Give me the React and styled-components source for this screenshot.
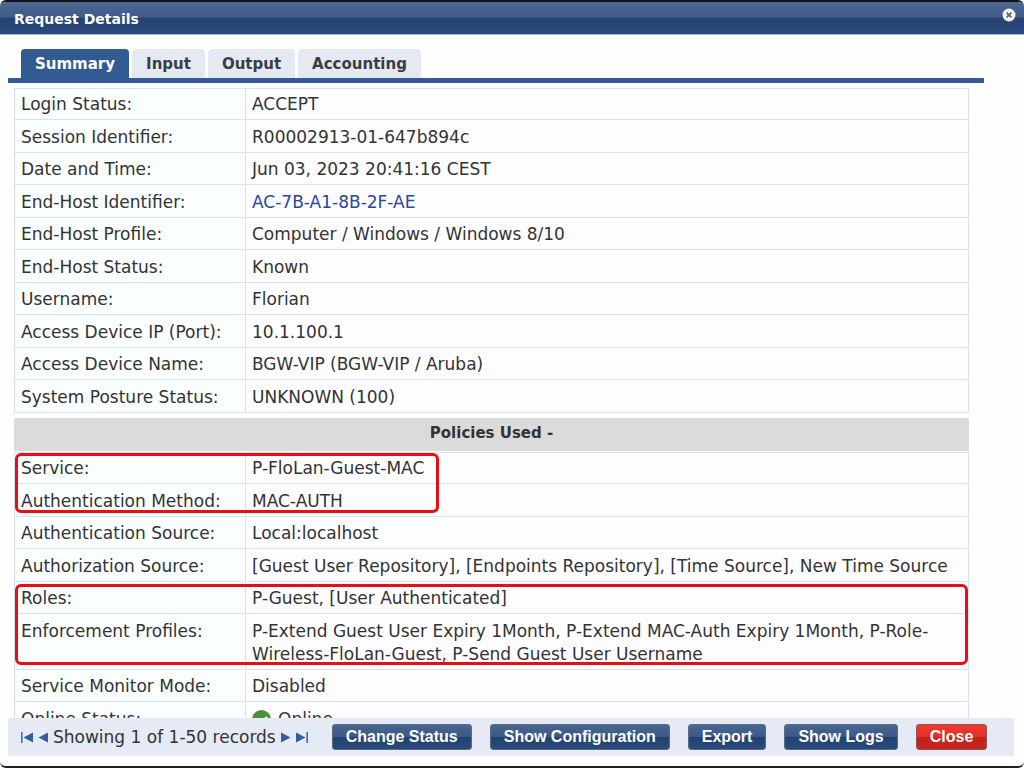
import React from "react";
import styled, { createGlobalStyle, css } from "styled-components";

const GlobalStyle = createGlobalStyle`
  * { box-sizing: border-box; }
  body {
    margin: 0;
    background: #fff;
    color: #333;
    font-family: Verdana, "DejaVu Sans", sans-serif;
    font-size: 17px;
  }
`;

const Page = styled.div`
  height: 100vh;
  padding-bottom: 2px;
`;

const Dialog = styled.section`
  display: flex;
  flex-direction: column;
  height: 100%;
  background: #fefefe;
  border-top: 2px solid #111418;
  border-bottom: 2px solid #1c231f;
  border-radius: 6px;
  overflow: hidden;
`;

const TitleBar = styled.header`
  display: flex;
  justify-content: space-between;
  align-items: center;
  flex: none;
  height: 33px;
  padding: 0 8px 0 14px;
  background: linear-gradient(#4b6792 0, #3e5a86 48%, #25426f 50%, #2a4b7d 100%);
  border-bottom: 1px solid #a9b3d8;
`;

const Title = styled.h1`
  margin: 0;
  padding-top: 2px;
  font-size: 14px;
  line-height: 20px;
  color: #fff;
`;

const IconButton = styled.button`
  display: flex;
  padding: 0;
  border: 0;
  background: none;
  cursor: pointer;
`;

const DismissButton = styled(IconButton)`
  align-self: flex-start;
  margin-top: 6px;
`;

const Tabs = styled.nav`
  display: flex;
  flex: none;
  gap: 3px;
  margin: 14px 40px 0 8px;
  padding-left: 13px;
  border-bottom: 5px solid #335b93;
`;

const Tab = styled.button`
  height: 29px;
  padding: 1px 14px 0;
  border: 0;
  border-radius: 4px 4px 0 0;
  font-family: inherit;
  font-size: 15px;
  font-weight: bold;
  line-height: 20px;
  cursor: pointer;
  color: ${(p) => (p.$active ? "#fff" : "#3a3d42")};
  background: ${(p) => (p.$active ? "#335b93" : "#e5e9f2")};
`;

const Content = styled.main`
  flex: 1;
  min-height: 0;
  margin-top: 4px;
  padding: 0 54px 0 13px;
  overflow-y: auto;
  scrollbar-width: none;
`;

const DetailTable = styled.table`
  width: 100%;
  table-layout: fixed;
  border-collapse: separate;
  border-spacing: 1px;
`;

const cell = css`
  padding: 4px 6px 3px;
  border: 0 solid #d3e0f5;
  border-bottom-width: 1px;
  border-left-width: 1px;
  font-weight: normal;
  line-height: 23px;
  text-align: left;
  vertical-align: top;
  tr:first-child > & {
    border-top-width: 1px;
  }
  tr:nth-child(even) > & {
    padding-top: 5px;
  }
`;

const Label = styled.th`
  ${cell}
  width: 230px;
  background: #fafeff;
`;

const Value = styled.td`
  ${cell}
  border-right-width: 1px;
  background: #fdfdff;
`;

const Row = styled.tr`
  position: relative;
`;

const Highlight = styled.span`
  position: absolute;
  z-index: 1;
  top: 1px;
  left: 1px;
  width: ${(p) => p.$width};
  height: ${(p) => p.$height};
  border: 3px solid #e60f14;
  border-radius: 6px;
  pointer-events: none;
`;

const SectionTitle = styled.h2`
  margin: 4px 1px 0;
  padding: 4px 0 6px;
  background: #dbdbdb;
  border-radius: 2px;
  font-size: 15px;
  line-height: 23px;
  text-align: center;
`;

const Link = styled.a`
  color: #2a479b;
  text-decoration: none;
`;

const Status = styled.span`
  display: flex;
  align-items: center;
  gap: 7px;
`;

const Footer = styled.footer`
  display: flex;
  align-items: center;
  flex: none;
  gap: 23px;
  height: 38px;
  margin: 0 10px 10px 8px;
  padding-left: 12px;
  background: #e5eaf4;
`;

const Pager = styled.div`
  display: flex;
  align-items: center;
  gap: 5px;
  white-space: nowrap;
`;

const Actions = styled.div`
  display: flex;
  gap: 18px;
`;

const ActionButton = styled.button`
  height: 26px;
  padding: 0 13px;
  border: 1px solid ${(p) => (p.$danger ? "#8c5650" : "#5c6b85")};
  border-radius: 3px;
  font: bold 16px/22px Arial, "Liberation Sans", sans-serif;
  white-space: nowrap;
  color: #fff;
  cursor: pointer;
  background: ${(p) =>
    p.$danger
      ? "linear-gradient(#f0392f 0, #e5312a 48%, #c1221b 50%, #c9261f 100%)"
      : "linear-gradient(#47658f 0, #3b5a88 48%, #23426f 50%, #284a7b 100%)"};
`;

const CloseIcon = () => (
  <svg width="14" height="14" viewBox="0 0 14 14" aria-hidden="true">
    <circle cx="7" cy="7" r="6.5" fill="#f4f4f4" />
    <path d="M4.6 4.6l4.8 4.8M9.4 4.6l-4.8 4.8" stroke="#666" strokeWidth="1.8" />
  </svg>
);

const Arrow = ({ flip, bar }) => (
  <svg
    width={bar ? 13 : 10}
    height="12"
    viewBox={bar ? "0 0 13 12" : "0 0 10 12"}
    transform={flip ? "scale(-1 1)" : undefined}
    aria-hidden="true"
  >
    <path d="M0 1.6l9.5 5-9.5 5z" fill="#2f5f9f" />
    {bar && <path d="M11.2 1v11" stroke="#3f70b0" strokeWidth="1.6" />}
  </svg>
);

const CheckIcon = () => (
  <svg width="19" height="19" viewBox="0 0 19 19" aria-hidden="true">
    <circle cx="9.5" cy="9.5" r="9.5" fill="#4c8f3c" />
    <path d="M4.5 10.5l3.5 3.5 7-7" fill="none" stroke="#fff" strokeWidth="2.4" />
  </svg>
);

const summary = [
  ["Login Status:", "ACCEPT"],
  ["Session Identifier:", "R00002913-01-647b894c"],
  ["Date and Time:", "Jun 03, 2023 20:41:16 CEST"],
  ["End-Host Identifier:", <Link href="#endpoint">AC-7B-A1-8B-2F-AE</Link>],
  ["End-Host Profile:", "Computer / Windows / Windows 8/10"],
  ["End-Host Status:", "Known"],
  ["Username:", "Florian"],
  ["Access Device IP (Port):", "10.1.100.1"],
  ["Access Device Name:", "BGW-VIP (BGW-VIP / Aruba)"],
  ["System Posture Status:", "UNKNOWN (100)"],
];

const policies = [
  ["Service:", "P-FloLan-Guest-MAC", { width: "424px", height: "60px" }],
  ["Authentication Method:", "MAC-AUTH"],
  ["Authentication Source:", "Local:localhost"],
  [
    "Authorization Source:",
    "[Guest User Repository], [Endpoints Repository], [Time Source], New Time Source",
  ],
  [
    "Roles:",
    "P-Guest, [User Authenticated]",
    { width: "calc(100% - 2px)", height: "81px" },
  ],
  [
    "Enforcement Profiles:",
    "P-Extend Guest User Expiry 1Month, P-Extend MAC-Auth Expiry 1Month, P-Role-Wireless-FloLan-Guest, P-Send Guest User Username",
  ],
  ["Service Monitor Mode:", "Disabled"],
  [
    "Online Status:",
    <Status>
      <CheckIcon />
      Online
    </Status>,
  ],
];

const Details = ({ rows }) => (
  <DetailTable>
    <tbody>
      {rows.map(([label, value, mark]) => (
        <Row key={label}>
          <Label scope="row">
            {label}
            {mark && <Highlight $width={mark.width} $height={mark.height} />}
          </Label>
          <Value>{value}</Value>
        </Row>
      ))}
    </tbody>
  </DetailTable>
);

export default function App() {
  return (
    <Page>
      <GlobalStyle />
      <Dialog aria-label="Request Details">
        <TitleBar>
          <Title>Request Details</Title>
          <DismissButton aria-label="Dismiss">
            <CloseIcon />
          </DismissButton>
        </TitleBar>
        <Tabs>
          <Tab $active>Summary</Tab>
          <Tab>Input</Tab>
          <Tab>Output</Tab>
          <Tab>Accounting</Tab>
        </Tabs>
        <Content>
          <Details rows={summary} />
          <SectionTitle>Policies Used -</SectionTitle>
          <Details rows={policies} />
        </Content>
        <Footer>
          <Pager>
            <IconButton aria-label="First record">
              <Arrow flip bar />
            </IconButton>
            <IconButton aria-label="Previous record">
              <Arrow flip />
            </IconButton>
            <span>Showing 1 of 1-50 records</span>
            <IconButton aria-label="Next record">
              <Arrow />
            </IconButton>
            <IconButton aria-label="Last record">
              <Arrow bar />
            </IconButton>
          </Pager>
          <Actions>
            <ActionButton>Change Status</ActionButton>
            <ActionButton>Show Configuration</ActionButton>
            <ActionButton>Export</ActionButton>
            <ActionButton>Show Logs</ActionButton>
            <ActionButton $danger>Close</ActionButton>
          </Actions>
        </Footer>
      </Dialog>
    </Page>
  );
}
